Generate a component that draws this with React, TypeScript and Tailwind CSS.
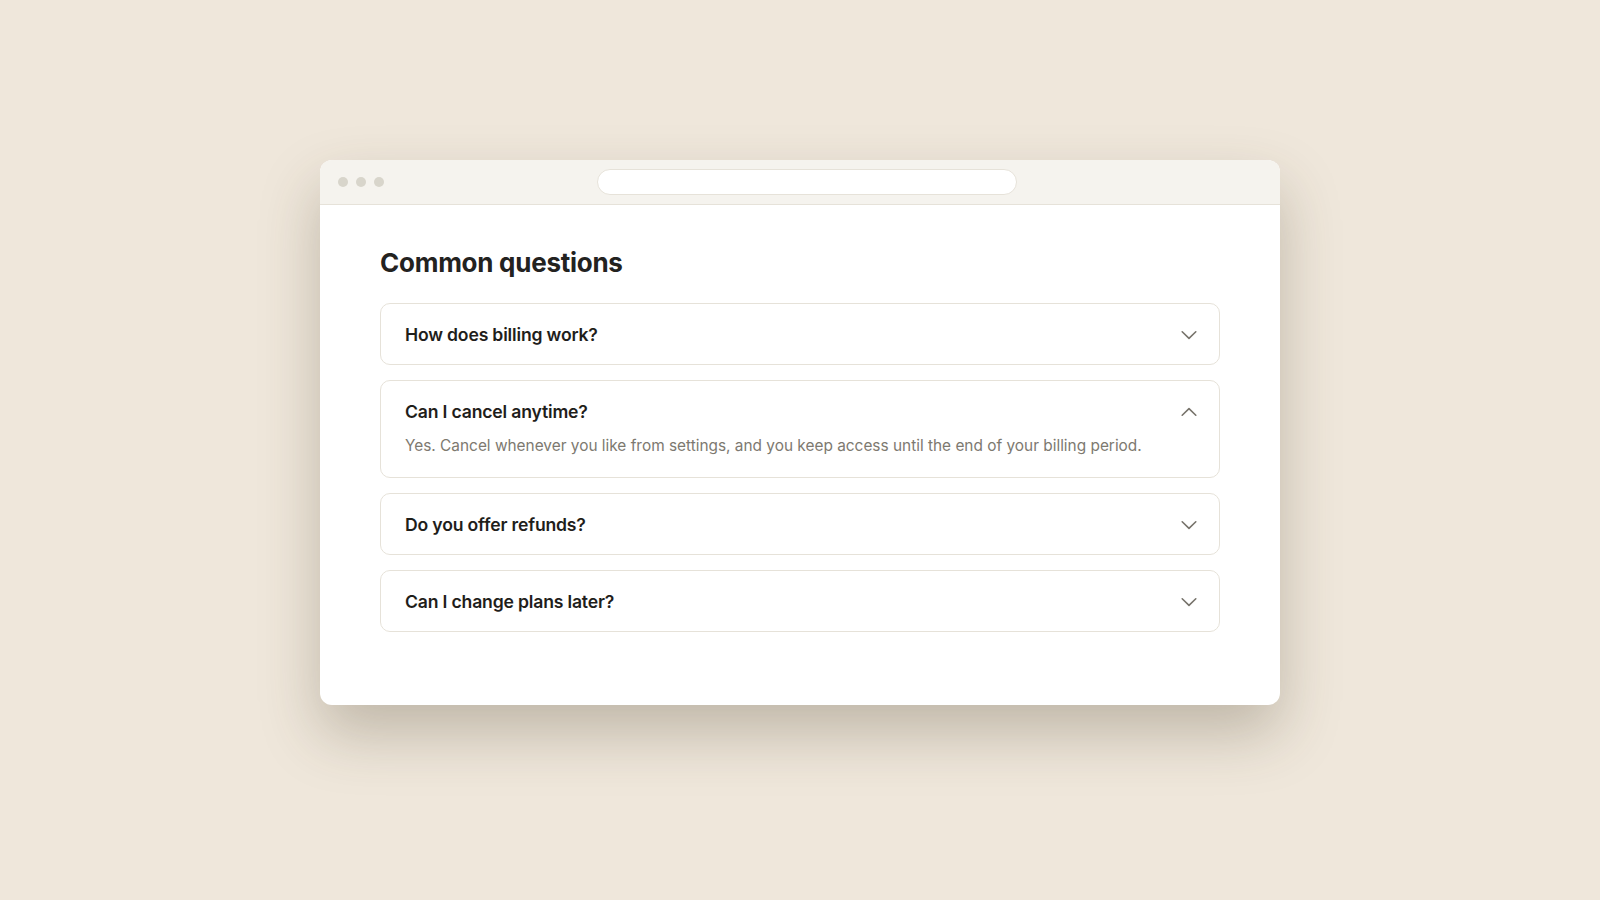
import { useState } from "react";

interface faqItem {
  question: string;
  answer: string;
}

const faqs: faqItem[] = [
  {
    question: "How does billing work?",
    answer: "You are billed at the start of each cycle for the plan you choose.",
  },
  {
    question: "Can I cancel anytime?",
    answer:
      "Yes. Cancel whenever you like from settings, and you keep access until the end of your billing period.",
  },
  {
    question: "Do you offer refunds?",
    answer: "Refunds are available within 14 days of purchase.",
  },
  {
    question: "Can I change plans later?",
    answer: "You can upgrade or downgrade at any time from your account.",
  },
];

const Chevron = ({ open }: { open: boolean }) => (
  <svg
    width="16"
    height="10"
    viewBox="0 0 16 10"
    fill="none"
    className={open ? "rotate-180" : ""}
  >
    <polyline
      points="1.2,1.8 8,8.4 14.8,1.8"
      stroke="#77736b"
      strokeWidth="1.6"
      strokeLinecap="round"
      strokeLinejoin="round"
    />
  </svg>
);

const App: React.FC = () => {
  const [openIndex, setOpenIndex] = useState<number | null>(1);

  return (
    <div
      className="min-h-screen w-full bg-[#efe7db] pt-[160px]"
      style={{ fontFamily: "Inter, 'Liberation Sans', sans-serif" }}
    >
      <div className="mx-auto flex h-[545px] w-[960px] flex-col overflow-hidden rounded-xl bg-white shadow-[0_28px_60px_rgba(70,58,35,0.28)]">
        {/* barra do navegador */}
        <div className="flex h-[45px] items-center border-b border-[#e6e2d9] bg-[#f5f3ee] pl-[18px]">
          <div className="flex gap-2">
            <span className="h-[10px] w-[10px] rounded-full bg-[#d8d5cb]"></span>
            <span className="h-[10px] w-[10px] rounded-full bg-[#d8d5cb]"></span>
            <span className="h-[10px] w-[10px] rounded-full bg-[#d8d5cb]"></span>
          </div>
          <div className="ml-[213px] h-[26px] w-[420px] rounded-full border border-[#e6e2d9] bg-white"></div>
        </div>

        <div className="px-[60px] pt-[42px]">
          <h1 className="mb-[24px] text-[26px] leading-8 font-bold tracking-[-0.01em] text-[#23221f]">
            Common questions
          </h1>
          <div className="flex flex-col gap-[15px]">
            {faqs.map((item, index) => {
              const open = openIndex === index;
              return (
                <div
                  key={index}
                  className="rounded-[10px] border border-[#e6e2d9] bg-white pt-[17px] pb-[15px] pr-[22px] pl-6"
                >
                  <button
                    onClick={() => setOpenIndex(open ? null : index)}
                    className="flex h-7 w-full items-center justify-between text-left"
                  >
                    <span className="text-[17.6px] font-semibold tracking-[-0.01em] text-[#1f1e1b]">
                      {item.question}
                    </span>
                    <Chevron open={open} />
                  </button>
                  {open && (
                    <p className="mt-2 mb-1 text-[15.4px] leading-6 text-[#7d7970]">
                      {item.answer}
                    </p>
                  )}
                </div>
              );
            })}
          </div>
        </div>
      </div>
    </div>
  );
};

export default App;
